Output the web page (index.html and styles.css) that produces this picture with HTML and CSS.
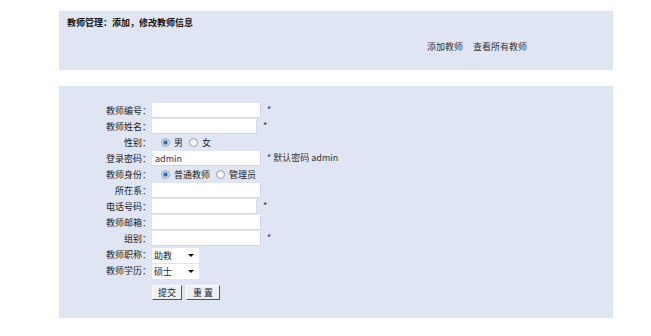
FILE: index.html
```html
<!DOCTYPE html>
<html lang="zh-CN">
<head>
    <meta charset="UTF-8">
    <title>教师管理</title>
    <link rel="stylesheet" href="styles.css">
</head>
<body>
    <div class="page">
        <div class="header-box">
            <div class="page-title">教师管理：添加，修改教师信息</div>
            <div class="nav-links">
                <a href="#">添加教师</a>
                <a href="#">查看所有教师</a>
            </div>
        </div>

        <div class="form-box">
            <form>
                <table class="teacher-form">
                    <tr>
                        <td class="label">教师编号：</td>
                        <td><input type="text" class="field"> <span class="star">*</span></td>
                    </tr>
                    <tr>
                        <td class="label">教师姓名：</td>
                        <td><input type="text" class="field short"> <span class="star">*</span></td>
                    </tr>
                    <tr>
                        <td class="label">性别：</td>
                        <td class="choices">
                            <label><input type="radio" name="sex" checked> 男</label>
                            <label><input type="radio" name="sex"> 女</label>
                        </td>
                    </tr>
                    <tr>
                        <td class="label">登录密码：</td>
                        <td><input type="text" class="field" value="admin"> <span class="star">* 默认密码 admin</span></td>
                    </tr>
                    <tr>
                        <td class="label">教师身份：</td>
                        <td class="choices">
                            <label><input type="radio" name="role" checked> 普通教师</label>
                            <label><input type="radio" name="role"> 管理员</label>
                        </td>
                    </tr>
                    <tr>
                        <td class="label">所在系：</td>
                        <td><input type="text" class="field"></td>
                    </tr>
                    <tr>
                        <td class="label">电话号码：</td>
                        <td><input type="text" class="field short"> <span class="star">*</span></td>
                    </tr>
                    <tr>
                        <td class="label">教师邮箱：</td>
                        <td><input type="text" class="field"></td>
                    </tr>
                    <tr>
                        <td class="label">组别：</td>
                        <td><input type="text" class="field"> <span class="star">*</span></td>
                    </tr>
                    <tr>
                        <td class="label">教师职称：</td>
                        <td>
                            <span class="select-wrap">
                                <select>
                                    <option>助教</option>
                                    <option>讲师</option>
                                    <option>副教授</option>
                                    <option>教授</option>
                                </select>
                            </span>
                        </td>
                    </tr>
                    <tr>
                        <td class="label">教师学历：</td>
                        <td>
                            <span class="select-wrap">
                                <select>
                                    <option>硕士</option>
                                    <option>学士</option>
                                    <option>博士</option>
                                </select>
                            </span>
                        </td>
                    </tr>
                    <tr>
                        <td></td>
                        <td class="actions">
                            <button type="submit" class="btn">提交</button>
                            <button type="reset" class="btn">重 置</button>
                        </td>
                    </tr>
                </table>
            </form>
        </div>
    </div>
</body>
</html>
```

FILE: styles.css
```css
* {
    margin: 0;
    padding: 0;
    box-sizing: border-box;
}

body {
    font-family: "Noto Sans CJK SC", "Liberation Sans", sans-serif;
    font-size: 9px;
    color: #222;
    background: white;
}

.page {
    width: 554px;
    margin-left: 59px;
    padding-top: 11px;
}

.header-box {
    background: #e0e5f4;
    height: 59px;
    padding: 6px 8px 0;
}

.page-title {
    font-weight: bold;
    color: #111;
    line-height: 12px;
}

.nav-links {
    margin-top: 12px;
    padding-left: 360px;
    line-height: 12px;
}

.nav-links a {
    color: #333;
    text-decoration: none;
    margin-right: 8px;
}

.form-box {
    background: #e0e5f4;
    margin-top: 16px;
    height: 232px;
    padding: 16px 0 0 46px;
}

.teacher-form {
    border-collapse: collapse;
}

.teacher-form td {
    height: 16px;
    padding: 0;
    vertical-align: middle;
    white-space: nowrap;
    line-height: 15px;
}

.teacher-form .label {
    width: 47px;
    text-align: right;
    padding-right: 1px;
    color: #222;
}

.field {
    width: 109px;
    height: 15px;
    border: 1px solid #fff;
    border-bottom-color: #d4d8e4;
    border-right-color: #d4d8e4;
    background: white;
    font-family: "Noto Sans CJK SC", "Liberation Sans", sans-serif;
    font-size: 9px;
    color: #4a1d45;
    padding: 0 2px;
    vertical-align: middle;
    outline: none;
}

.field.short {
    width: 105px;
}

.star {
    margin-left: 4px;
    color: #333;
}

.choices {
    padding-left: 9px !important;
}

.choices label {
    margin-right: 4px;
}

.choices input[type="radio"] {
    appearance: none;
    -webkit-appearance: none;
    width: 9px;
    height: 9px;
    margin: 0 2px 0 0;
    border: 1px solid #9aa0ab;
    border-radius: 50%;
    background: radial-gradient(circle at 60% 60%, #ffffff 0%, #e4e6ea 100%);
    vertical-align: -1px;
}

.choices input[type="radio"]:checked {
    background: radial-gradient(circle, #1d5fa8 0, #2f78c4 1.6px, #bcd3ea 2.6px, #f4f5f7 3.5px);
}

.select-wrap {
    position: relative;
    display: inline-block;
    width: 47px;
    height: 15px;
    background: white;
    vertical-align: middle;
}

.select-wrap select {
    appearance: none;
    -webkit-appearance: none;
    display: block;
    width: 100%;
    height: 15px;
    border: none;
    background: transparent;
    font-family: "Noto Sans CJK SC", sans-serif;
    font-size: 9px;
    line-height: 15px;
    color: #222;
    padding-left: 2px;
    outline: none;
}

.select-wrap::after {
    content: "";
    position: absolute;
    right: 5px;
    top: 6px;
    border-left: 3px solid transparent;
    border-right: 3px solid transparent;
    border-top: 3px solid #111;
    pointer-events: none;
}

.actions {
    padding-top: 6px !important;
}

.btn {
    height: 15px;
    padding: 0 5px;
    background: #eef0f6;
    border: 1px solid #fff;
    border-right-color: #555;
    border-bottom-color: #555;
    font-family: "Noto Sans CJK SC", sans-serif;
    font-size: 9px;
    line-height: 12px;
    color: #222;
    margin-right: 2px;
    cursor: pointer;
}

.btn + .btn {
    padding: 0 6px;
}
```
